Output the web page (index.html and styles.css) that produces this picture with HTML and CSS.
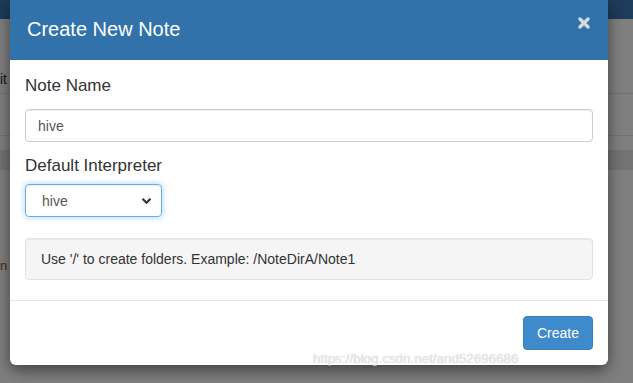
FILE: index.html
```html
<!DOCTYPE html>
<html lang="en">
<head>
  <meta charset="UTF-8" />
  <title>Create New Note</title>
  <link rel="stylesheet" href="styles.css">
</head>
<body>

  <!-- page behind the dialog -->
  <div class="page">
    <div class="navbar"></div>
    <div class="toolbar"><span class="edit">it</span></div>
    <div class="subbar"></div>
    <div class="band"></div>
    <div class="row-text"><span>n</span></div>
  </div>

  <div class="backdrop">
    <div class="modal">
      <div class="modal-header">
        <h4 class="modal-title">Create New Note</h4>
        <span class="close">
          <svg width="12" height="12" viewBox="0 0 12 12">
            <path d="M2 2 L10 10 M10 2 L2 10" stroke="#d6dade" stroke-width="3.4" stroke-linecap="round"/>
          </svg>
        </span>
      </div>

      <div class="modal-body">
        <label class="field-label">Note Name</label>
        <div class="input">hive</div>

        <label class="field-label second">Default Interpreter</label>
        <div class="select">
          <span>hive</span>
          <svg width="11" height="8" viewBox="0 0 11 8">
            <path d="M1.5 1.8 L5.5 5.8 L9.5 1.8" fill="none" stroke="#333" stroke-width="2.2"/>
          </svg>
        </div>

        <div class="well">Use '/' to create folders. Example: /NoteDirA/Note1</div>
      </div>

      <div class="modal-footer">
        <button class="btn-create">Create</button>
      </div>
    </div>
  </div>

  <div class="watermark">https://blog.csdn.net/and52696686</div>

</body>
</html>
```

FILE: styles.css
```css
* {
  box-sizing: border-box;
  margin: 0;
  padding: 0;
  font-family: 'Liberation Sans', Arial, sans-serif;
}

body {
  width: 633px;
  height: 383px;
  overflow: hidden;
  background: #ffffff;
  position: relative;
}

/* page underneath */
.page {
  width: 100%;
  height: 100%;
  display: flex;
  flex-direction: column;
}

.navbar {
  height: 19px;
  background: #3a76b4;
}

.toolbar {
  height: 75px;
  border-bottom: 1px solid #e4e4e4;
  display: flex;
  align-items: flex-end;
  padding-bottom: 6px;
}

.toolbar .edit {
  font-size: 14px;
  color: #333;
  margin-left: 0;
}

.subbar {
  height: 42px;
  border-bottom: 1px solid #e4e4e4;
}

.band {
  height: 20px;
  margin-top: 14px;
  background: #e8e9ea;
}

.row-text {
  margin-top: 88px;
  font-size: 13px;
  color: #8a5a20;
}

.row-text span {
  margin-left: 0;
}

/* dialog */
.backdrop {
  position: absolute;
  inset: 0;
  background: rgba(0, 0, 0, 0.5);
  padding-left: 10px;
}

.modal {
  width: 598px;
  height: 365px;
  background: #fff;
  border-radius: 0 0 6px 6px;
  box-shadow: 0 5px 15px rgba(0, 0, 0, 0.5);
  display: flex;
  flex-direction: column;
  overflow: hidden;
}

.modal-header {
  height: 60px;
  background: #3172aa;
  display: flex;
  align-items: center;
  justify-content: space-between;
  padding: 0 17px 2px 17px;
}

.modal-title {
  font-size: 20px;
  font-weight: normal;
  color: #fff;
}

.close {
  display: flex;
  margin-top: -12px;
  margin-right: 1px;
}

.modal-body {
  padding: 16px 15px 20px;
  display: flex;
  flex-direction: column;
  border-bottom: 1px solid #e5e5e5;
}

.field-label {
  font-size: 17px;
  line-height: 20px;
  color: #333;
  margin-bottom: 13px;
}

.field-label.second {
  margin-top: 14px;
  margin-bottom: 8px;
}

.input {
  height: 33px;
  border: 1px solid #ccc;
  border-radius: 4px;
  padding: 0 12px;
  display: flex;
  align-items: center;
  font-size: 14px;
  color: #555;
  box-shadow: inset 0 1px 1px rgba(0, 0, 0, 0.075);
}

.select {
  width: 137px;
  height: 33px;
  border: 1px solid #66afe9;
  border-radius: 4px;
  padding: 0 9px 0 16px;
  display: flex;
  align-items: center;
  justify-content: space-between;
  font-size: 14px;
  color: #555;
  box-shadow: inset 0 1px 1px rgba(0, 0, 0, 0.075), 0 0 6px rgba(102, 175, 233, 0.6);
}

.well {
  margin-top: 21px;
  height: 42px;
  background: #f5f5f5;
  border: 1px solid #e3e3e3;
  border-radius: 4px;
  padding: 0 15px;
  display: flex;
  align-items: center;
  font-size: 14px;
  color: #333;
  box-shadow: inset 0 1px 1px rgba(0, 0, 0, 0.05);
}

.modal-footer {
  flex: 1;
  display: flex;
  justify-content: flex-end;
  padding: 15px 15px 0;
}

.btn-create {
  height: 34px;
  padding: 0 13px;
  background: #3e8acb;
  border: 1px solid #3780bf;
  border-radius: 4px;
  color: #fff;
  font-size: 14px;
}

.watermark {
  position: absolute;
  left: 313px;
  top: 351px;
  font-size: 13.4px;
  color: rgba(240, 240, 240, 0.8);
  text-shadow: 0 0 1px rgba(0, 0, 0, 0.25);
}
```
